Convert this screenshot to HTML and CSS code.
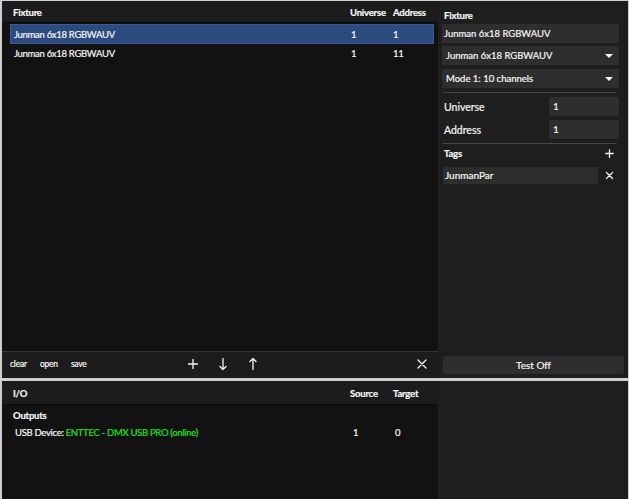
FILE: index.html
```html
<!DOCTYPE html>
<html lang="en">
<head>
    <meta charset="UTF-8">
    <meta name="viewport" content="width=device-width, initial-scale=1.0">
    <title>Fixtures</title>
    <link rel="stylesheet" href="styles.css">
</head>
<body>
    <div class="app">
        <section class="fixtures">
            <div class="table-head">
                <span>Fixture</span>
                <span>Universe</span>
                <span>Address</span>
            </div>
            <div class="rows">
                <div class="row selected">
                    <span>Junman 6x18 RGBWAUV</span>
                    <span>1</span>
                    <span>1</span>
                </div>
                <div class="row">
                    <span>Junman 6x18 RGBWAUV</span>
                    <span>1</span>
                    <span>11</span>
                </div>
            </div>
            <div class="toolbar">
                <div class="file-actions">
                    <span>clear</span>
                    <span>open</span>
                    <span>save</span>
                </div>
                <div class="icon-actions">
                    <svg class="icon" viewBox="0 0 12 12"><path d="M6 1.5v9M1.5 6h9"/></svg>
                    <svg class="icon" viewBox="0 0 12 12"><path d="M6 0.5v11M3 8.5l3 3 3-3"/></svg>
                    <svg class="icon" viewBox="0 0 12 12"><path d="M6 11.5v-11M3 3.5l3-3 3 3"/></svg>
                </div>
                <div class="remove-action">
                    <svg class="icon" viewBox="0 0 12 12"><path d="M2 2l8 8M10 2l-8 8"/></svg>
                </div>
            </div>
        </section>

        <aside class="inspector">
            <div class="title">Fixture</div>
            <div class="field first">Junman 6x18 RGBWAUV</div>
            <div class="field select">
                <span>Junman 6x18 RGBWAUV</span>
                <span class="caret"></span>
            </div>
            <div class="field select">
                <span>Mode 1: 10 channels</span>
                <span class="caret"></span>
            </div>
            <div class="divider"></div>
            <div class="prop">
                <span class="label">Universe</span>
                <div class="field small">1</div>
            </div>
            <div class="prop">
                <span class="label">Address</span>
                <div class="field small">1</div>
            </div>
            <div class="divider"></div>
            <div class="tags-head">
                <span class="title">Tags</span>
                <svg class="icon tiny" viewBox="0 0 12 12"><path d="M6 1v10M1 6h10"/></svg>
            </div>
            <div class="tag">
                <div class="field tag-field">JunmanPar</div>
                <svg class="icon tiny" viewBox="0 0 12 12"><path d="M2 2l8 8M10 2l-8 8"/></svg>
            </div>
            <button class="test-btn">Test Off</button>
        </aside>

        <section class="io">
            <div class="table-head">
                <span>I/O</span>
                <span>Source</span>
                <span>Target</span>
            </div>
            <div class="io-body">
                <div class="group-title">Outputs</div>
                <div class="io-row">
                    <span>USB Device: <span class="online">ENTTEC - DMX USB PRO (online)</span></span>
                    <span>1</span>
                    <span>0</span>
                </div>
            </div>
        </section>

        <aside class="io-side"></aside>
    </div>
</body>
</html>
```

FILE: styles.css
```css
* {
    box-sizing: border-box;
}

body {
    margin: 0;
    height: 499px;
    padding: 1px 1px 0 2px;
    background-color: #cfcfcf;
    font-family: Lato, "Open Sans", sans-serif;
    font-size: 9.5px;
    color: #f6f6f6;
    -webkit-text-stroke: 0.2px;
    overflow: hidden;
}

.app {
    height: 100%;
    display: grid;
    grid-template-columns: 436px 1fr;
    grid-template-rows: 377px 1fr;
    row-gap: 3px;
}

/* fixture list */

.fixtures {
    background-color: #121212;
    display: flex;
    flex-direction: column;
}

.table-head {
    display: grid;
    grid-template-columns: 1fr 43px 45px;
    align-items: center;
    height: 22px;
    padding: 2px 0 0 11px;
    background-color: #1c1c1c;
    border-bottom: 1px solid #0b0b0b;
    font-weight: bold;
    letter-spacing: -0.2px;
}

.rows {
    flex: 1;
    letter-spacing: -0.3px;
}

.row {
    display: grid;
    grid-template-columns: 337px 42px 1fr;
    align-items: center;
    height: 19px;
    margin: 0 4px 0 8px;
    padding-left: 4px;
}

.row.selected {
    height: 20px;
    margin-top: 1px;
    background-color: #2c4a7e;
    border: 1px solid #3b5a92;
    padding-left: 3px;
}

.toolbar {
    display: grid;
    grid-template-columns: 1fr auto 1fr;
    align-items: center;
    height: 27px;
    padding: 0 10px 2px 8px;
    background-color: #1c1c1c;
    border-top: 1px solid #333;
}

.file-actions {
    display: flex;
    gap: 13px;
    font-size: 8.5px;
    letter-spacing: -0.2px;
}

.icon-actions {
    display: flex;
    gap: 18px;
    margin-left: 8px;
}

.remove-action {
    display: flex;
    justify-content: flex-end;
}

.icon {
    width: 12px;
    height: 12px;
    fill: none;
    stroke: #f6f6f6;
    stroke-width: 1.3;
    stroke-linecap: round;
    stroke-linejoin: round;
}

.icon.tiny {
    width: 9px;
    height: 9px;
    stroke-width: 1.7;
}

/* inspector */

.inspector {
    background-color: #1e1e1e;
    display: flex;
    flex-direction: column;
    padding: 0 9px 4px 4px;
}

.title {
    padding-left: 2px;
    font-weight: bold;
    letter-spacing: -0.2px;
}

.inspector > .title {
    height: 23px;
    padding-top: 3px;
    line-height: 24px;
}

.label {
    padding-left: 2px;
    font-size: 10.5px;
    margin-top: -3px;
}

.field {
    height: 19px;
    line-height: 19px;
    padding: 0 2px;
    background-color: #2e2e2e;
    margin-bottom: 4px;
    white-space: nowrap;
}

.field.first {
    margin-bottom: 3px;
}

.select {
    display: flex;
    justify-content: space-between;
    align-items: center;
    padding: 0 6px 0 4px;
}

.caret {
    width: 0;
    height: 0;
    border-left: 4px solid transparent;
    border-right: 4px solid transparent;
    border-top: 4px solid #f6f6f6;
}

.divider {
    height: 1px;
    margin: 0 3px 4px 1px;
    background-color: #464646;
}

.prop {
    display: flex;
    justify-content: space-between;
    align-items: center;
}

.field.small {
    width: 70px;
    padding-left: 4px;
    font-size: 10px;
}

.tags-head {
    display: flex;
    justify-content: space-between;
    align-items: center;
    height: 17px;
    margin: -3px 0 5px;
    padding-right: 5px;
}

.tag {
    display: flex;
    align-items: center;
    justify-content: space-between;
    padding-right: 5px;
}

.tag-field {
    width: 155px;
    height: 17px;
    line-height: 17px;
    margin: 0 0 0 1px;
    font-size: 10px;
}

.test-btn {
    margin: auto -5px 0 1px;
    height: 18px;
    border: none;
    border-radius: 3px;
    background-color: #2e2e2e;
    color: #f6f6f6;
    font-family: Lato, "Open Sans", sans-serif;
    font-size: 10px;
    -webkit-text-stroke: 0.2px;
}

/* io */

.io {
    background-color: #121212;
}

.io .table-head {
    height: 24px;
}

.io-body {
    padding: 3px 0 0 11px;
}

.group-title {
    font-weight: bold;
    height: 16px;
    line-height: 16px;
    letter-spacing: -0.2px;
}

.io-row {
    display: grid;
    grid-template-columns: 338px 42px 1fr;
    align-items: center;
    height: 16px;
    padding-left: 2px;
    letter-spacing: -0.3px;
}

.online {
    color: #1fe01f;
}

.io-side {
    background-color: #1e1e1e;
}
```
